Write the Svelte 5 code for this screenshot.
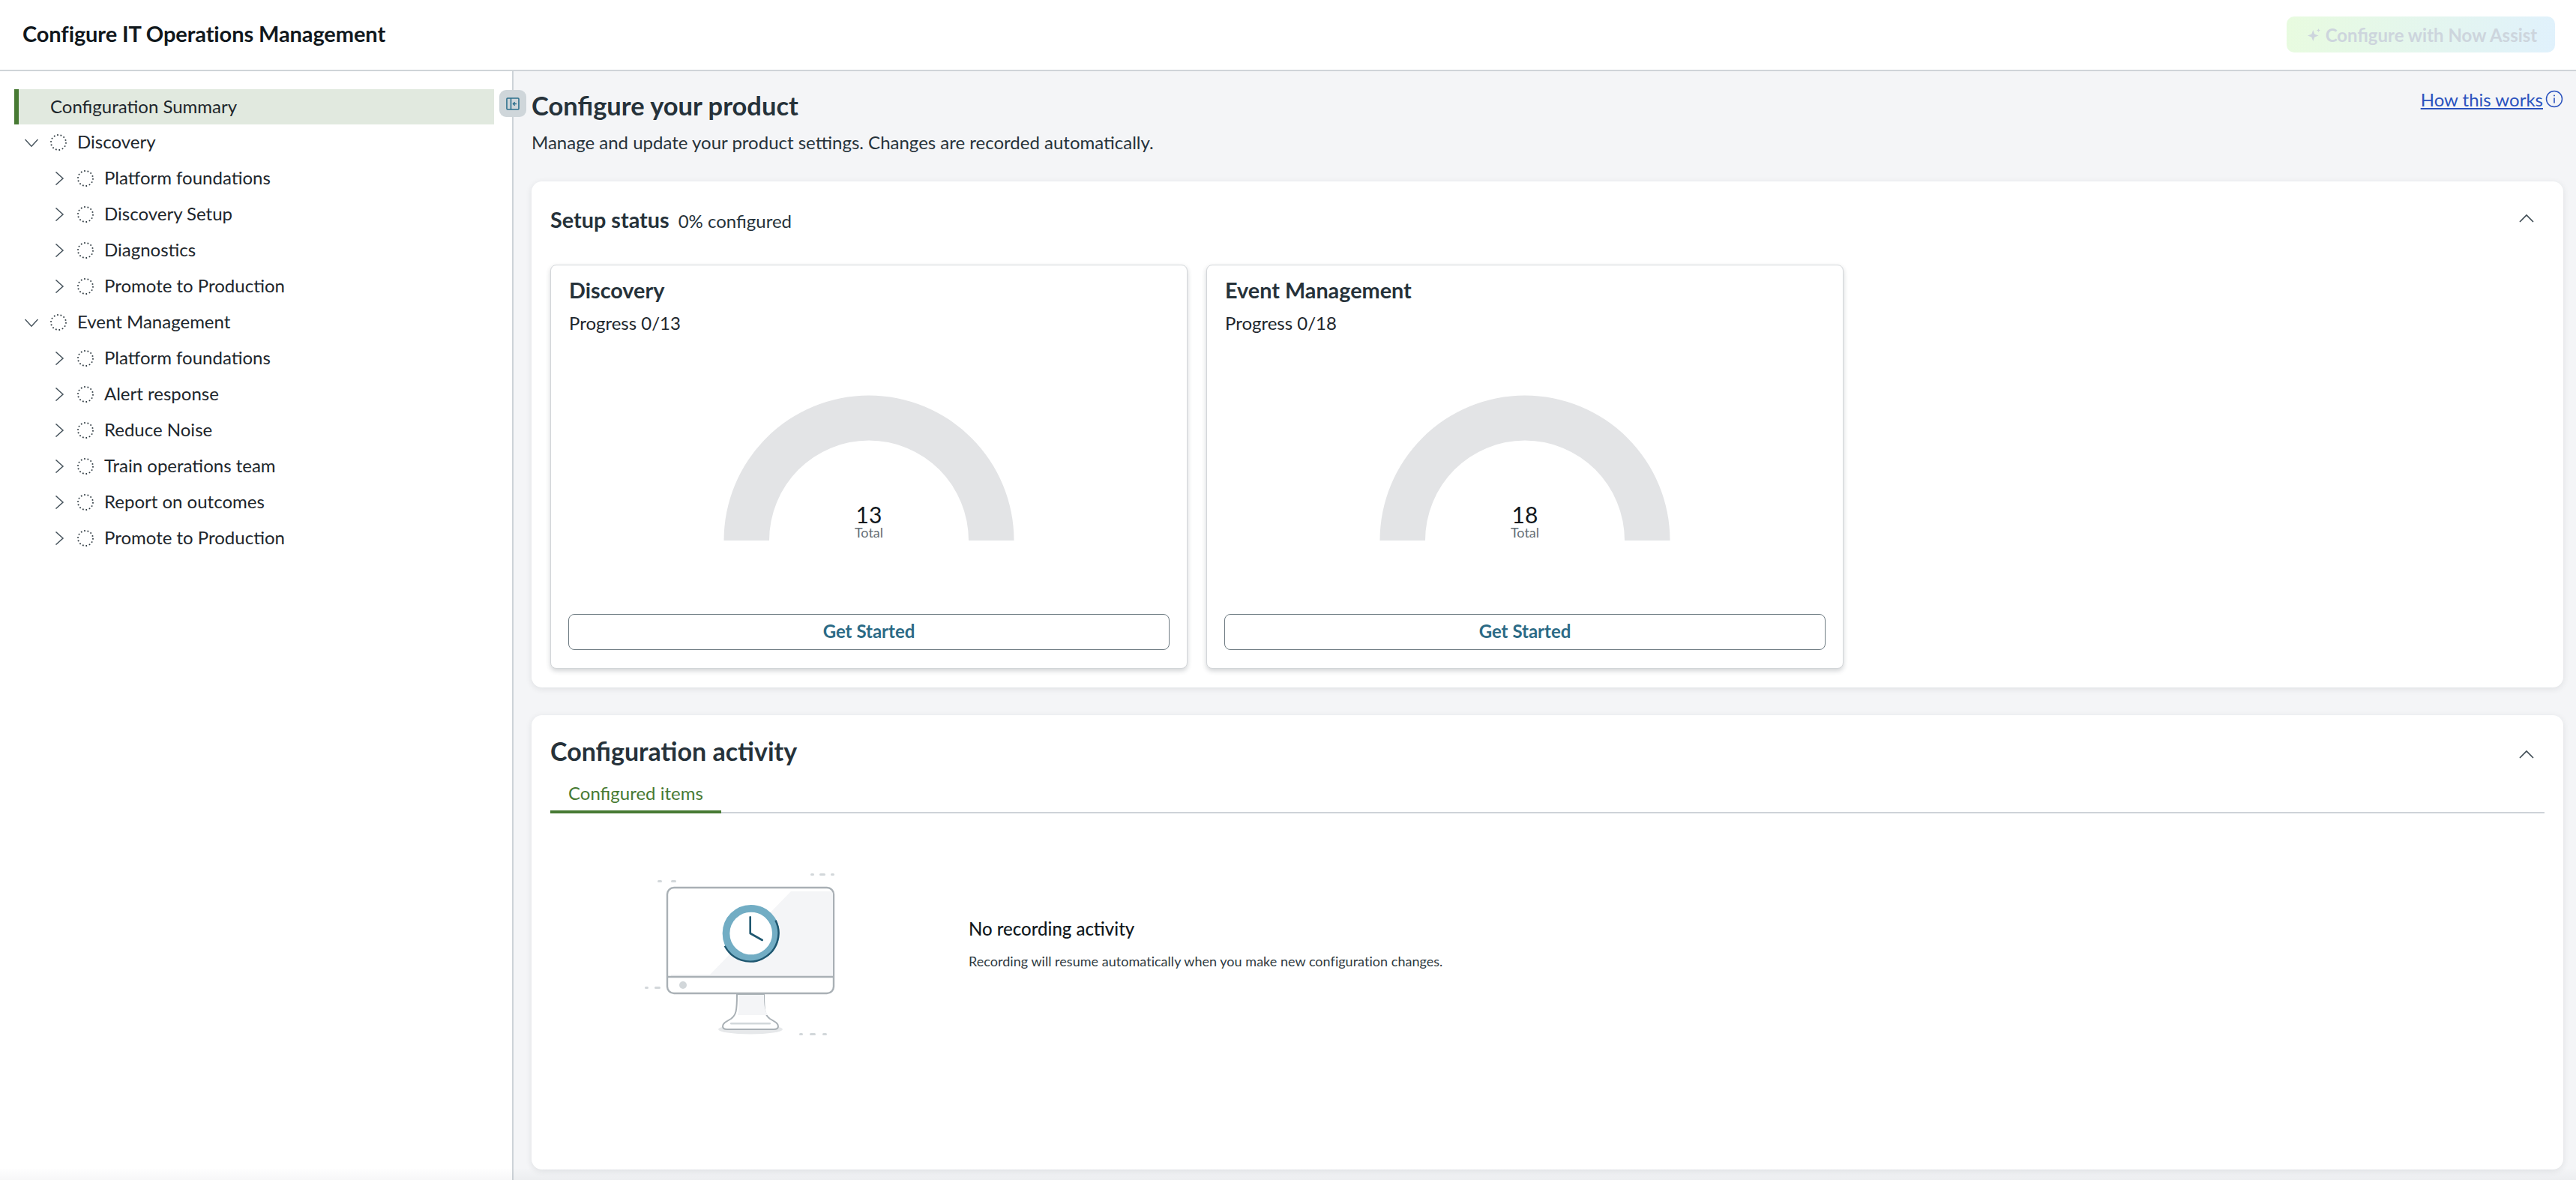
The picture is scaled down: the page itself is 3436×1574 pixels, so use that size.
<script>
  const groups = [
    { name: 'Discovery', items: ['Platform foundations', 'Discovery Setup', 'Diagnostics', 'Promote to Production'] },
    { name: 'Event Management', items: ['Platform foundations', 'Alert response', 'Reduce Noise', 'Train operations team', 'Report on outcomes', 'Promote to Production'] }
  ];
  const products = [
    { name: 'Discovery', total: 13 },
    { name: 'Event Management', total: 18 }
  ];
</script>

{#snippet ring()}
  <svg class="dot" viewBox="0 0 24 24" width="24" height="24"><circle cx="12" cy="12" r="10" fill="none" stroke="#2f3a41" stroke-width="1.800" stroke-dasharray="1.700 2.790"/></svg>
{/snippet}

<div class="page">
  <header class="topbar">
    <h1 class="app-title">Configure IT Operations Management</h1>
    <button class="assist" disabled>
      <svg viewBox="0 0 17 17" width="17" height="17"><path d="M7.300 2l2 5.400 5.300 2.100-5.300 2.100-2 5.400-2-5.400L0 9.500l5.300-2.100z" fill="#cdd5dd"/><path d="M14.500 0l.8 1.700 1.700.8-1.700.8-.8 1.700-.8-1.700-1.700-.8 1.700-.8z" fill="#cdd5dd"/></svg>
      <span>Configure with Now Assist</span>
    </button>
  </header>

  <div class="body">
    <nav class="sidebar">
      <div class="summary">Configuration Summary</div>
      {#each groups as g}
        <div class="row parent">
          <svg viewBox="0 0 18 18" width="18" height="18"><path d="M.5 5l8.500 9.200L17.500 5" fill="none" stroke="#46535c" stroke-width="1.500"/></svg>
          {@render ring()}
          <span class="label">{g.name}</span>
        </div>
        {#each g.items as item}
          <div class="row child">
            <svg viewBox="0 0 18 18" width="18" height="18"><path d="M4.500 .5l9.500 8.500-9.500 8.500" fill="none" stroke="#46535c" stroke-width="1.500"/></svg>
            {@render ring()}
            <span class="label">{item}</span>
          </div>
        {/each}
      {/each}
    </nav>

    <button class="collapse" aria-label="Collapse">
      <svg viewBox="0 0 18 17" width="18" height="17"><rect x="1" y="1" width="16" height="15" rx="1" fill="none" stroke="#2b6f8c" stroke-width="1.600"/><path d="M6.500 1v15" stroke="#2b6f8c" stroke-width="1.600"/><path d="M14 8.500H9.500M11.700 6.200 9.400 8.500l2.300 2.300" fill="none" stroke="#2b6f8c" stroke-width="1.400"/></svg>
    </button>

    <main class="main">
      <div class="page-head">
        <div>
          <h2 class="page-title">Configure your product</h2>
          <p class="page-sub">Manage and update your product settings. Changes are recorded automatically.</p>
        </div>
        <div class="how">
          <a href="#how">How this works</a>
          <svg viewBox="0 0 24 24" width="24" height="24"><circle cx="12" cy="12" r="10.500" fill="none" stroke="#2a52be" stroke-width="1.500"/><path d="M12 10.500v7" stroke="#2a52be" stroke-width="1.600"/><circle cx="12" cy="7.500" r="1" fill="#2a52be"/></svg>
        </div>
      </div>

      <section class="panel setup">
        <div class="panel-head">
          <div class="status"><span class="status-title">Setup status</span><span class="status-val">0% configured</span></div>
          <svg viewBox="0 0 20 12" width="20" height="12"><path d="M1 11l9-9 9 9" fill="none" stroke="#3d4a52" stroke-width="1.600"/></svg>
        </div>
        <div class="cards">
          {#each products as p}
            <article class="card">
              <h3 class="card-title">{p.name}</h3>
              <div class="progress">Progress 0/{p.total}</div>
              <div class="gauge">
                <svg viewBox="0 0 388 194" width="388" height="194"><path d="M.5 194A193.500 193.500 0 0 1 387.500 194H327A133 133.500 0 0 0 61 194Z" fill="#e3e4e6"/></svg>
                <div class="gauge-num">{p.total}</div>
                <div class="gauge-label">Total</div>
              </div>
              <button class="start"><span>Get Started</span></button>
            </article>
          {/each}
        </div>
      </section>

      <section class="panel activity">
        <div class="activity-head">
          <h2 class="activity-title">Configuration activity</h2>
          <svg class="activity-chev" viewBox="0 0 20 12" width="20" height="12"><path d="M1 11l9-9 9 9" fill="none" stroke="#3d4a52" stroke-width="1.600"/></svg>
        </div>
        <div class="tabs"><div class="tab">Configured items</div></div>
        <div class="empty">
          <svg class="illus" viewBox="0 0 340 280" width="340" height="280">
            <g fill="#d2d7da">
              <rect x="57" y="44" width="6" height="3" rx="1.500"/><rect x="75" y="44" width="7" height="3" rx="1.500"/>
              <rect x="261" y="35" width="5" height="3" rx="1.500"/><rect x="273" y="35" width="8" height="3" rx="1.500"/><rect x="288" y="35" width="5" height="3" rx="1.500"/>
              <rect x="40" y="186" width="5" height="3" rx="1.500"/><rect x="53" y="186" width="8" height="3" rx="1.500"/>
              <rect x="246" y="248" width="5" height="3" rx="1.500"/><rect x="260" y="248" width="8" height="3" rx="1.500"/><rect x="277" y="248" width="6" height="3" rx="1.500"/>
            </g>
            <ellipse cx="181" cy="243" rx="43" ry="6.500" fill="#e6e8ea"/>
            <path d="M163 196c0 22-1 28-8 33-7 4-11 6-11 10 0 3 3 4 6 4h62c3 0 6-1 6-4 0-4-4-6-11-10-7-5-8-11-8-33z" fill="#fff" stroke="#a9b0b5" stroke-width="2"/>
            <path d="M165 197h34c0 14 1 20 5 27h-40c2-7 1-13 1-27z" fill="#f4f5f7"/>
            <rect x="154" y="234" width="54" height="2.500" rx="1.200" fill="#d2d7da"/>
            <rect x="70" y="54" width="222" height="141" rx="9" fill="#fff" stroke="#a9b0b5" stroke-width="2.400"/>
            <path d="M75 59h212a4 4 0 0 1 4 4v109H75z" fill="#f4f5f7"/>
            <path d="M75 59h160L127 170H75z" fill="#fff"/>
            <path d="M70 173h222" stroke="#a9b0b5" stroke-width="2.400"/>
            <circle cx="91" cy="184" r="5" fill="#d2d7da"/>
            <circle cx="181.700" cy="115" r="33.200" fill="#fff" stroke="#72adc4" stroke-width="9.700"/>
            <path d="M214.400 97.600A37 37 0 1 1 146.700 131.700" fill="none" stroke="#1f5770" stroke-width="2.400"/>
            <path d="M180.700 93.300V115l16 9" fill="none" stroke="#1f5770" stroke-width="2.600" stroke-linecap="round" stroke-linejoin="round"/>
          </svg>
          <div class="empty-text">
            <div class="empty-title">No recording activity</div>
            <div class="empty-sub">Recording will resume automatically when you make new configuration changes.</div>
          </div>
        </div>
      </section>
    </main>

    <div class="fade"></div>
  </div>
</div>

<style>
  :global(body) { margin: 0; background: #fff; }
  .page { width: 3436px; height: 1574px; display: flex; flex-direction: column; font-family: Lato, "Liberation Sans", sans-serif; color: #1d262c; overflow: hidden; }
  .topbar { height: 93px; flex: none; display: flex; align-items: center; justify-content: space-between; padding: 0 28px 0 30px; background: #fff; border-bottom: 2px solid #cfd4d8; }
  .app-title { margin: 0 0 4px; font-size: 29px; letter-spacing: -0.1px; font-weight: 700; color: #11181d; }
  .assist { width: 358px; height: 48px; border: 0; border-radius: 10px; margin-bottom: 2px; display: flex; align-items: center; justify-content: center; gap: 7px; background: linear-gradient(100deg, #e8fbdf, #e0f1fc); color: #cdd5dd; font: 700 24px Lato, sans-serif; padding: 1px 0 0 4px; }
  .assist span { padding-top: 1px; }
  .body { flex: 1; display: flex; position: relative; min-height: 0; }
  .sidebar { width: 683px; flex: none; border-right: 2px solid #cdd3d8; padding-top: 24px; background: #fff; }
  .summary { margin-left: 19px; width: 640px; height: 47px; box-sizing: border-box; border-left: 6px solid #477a33; background: #e1e9df; padding-left: 42px; font-size: 24px; line-height: 45px; color: #1d262c; }
  .row { height: 48px; display: flex; align-items: center; font-size: 24px; color: #1d262c; }
  .row svg { flex: none; }
  .label { padding-bottom: 4px; }
  .parent { padding-left: 33px; }
  .child { padding-left: 70px; }
  .dot { display: block; }
  .parent .dot { margin: 0 13px 0 15px; }
  .child .dot { margin: 0 13px 0 14px; }
  .collapse { position: absolute; left: 666px; top: 25px; width: 36px; height: 36px; border: 0; padding: 0; border-radius: 9px; background: #cfd6da; display: flex; align-items: center; justify-content: center; }
  .main { flex: 1; min-width: 0; background: #f4f5f7; padding: 0 17px 0 24px; display: flex; flex-direction: column; }
  .page-head { display: flex; justify-content: space-between; height: 147px; flex: none; }
  .page-title { margin: 24px 0 0; font-size: 34.500px; line-height: 44px; font-weight: 700; color: #26323a; }
  .page-sub { margin: 12px 0 0; font-size: 24px; line-height: 30px; color: #26323a; }
  .how { display: flex; align-items: center; gap: 3px; height: 24px; margin: 25px 0 0 0; font-size: 24px; }
  .how a { color: #2a52be; text-decoration: underline; }
  .panel { background: #fff; border-radius: 14px; box-shadow: 0 2px 9px rgba(30, 40, 50, 0.1); box-sizing: border-box; }
  .setup { height: 675px; flex: none; padding: 0 25px; }
  .panel-head { height: 111px; box-sizing: border-box; padding: 0 14px 14px 0; display: flex; align-items: center; justify-content: space-between; }
  .status { display: flex; align-items: baseline; gap: 12px; margin-top: 4px; }
  .status-title { font-size: 28.800px; font-weight: 700; color: #26323a; }
  .status-val { font-size: 24px; color: #26323a; }
  .cards { display: flex; gap: 25px; }
  .card { width: 850px; height: 539px; box-sizing: border-box; background: #fff; border: 1px solid #d3d6d9; border-radius: 8px; box-shadow: 0 3px 6px rgba(30, 40, 50, 0.2); padding: 12px 24px 24px; display: flex; flex-direction: column; }
  .card-title { margin: 0; font-size: 28.800px; line-height: 42px; font-weight: 700; color: #26323a; }
  .progress { font-size: 24px; line-height: 30px; margin-top: 8px; color: #1d262c; }
  .gauge { position: relative; width: 388px; height: 194px; margin: 81px auto 0; flex: none; }
  .gauge svg { display: block; }
  .gauge-num { position: absolute; left: 0; right: 0; top: 144px; text-align: center; font-size: 30px; line-height: 30px; color: #11181d; }
  .gauge-label { position: absolute; left: 0; right: 0; top: 174px; text-align: center; font-size: 18px; line-height: 18px; color: #666e74; }
  .start { margin: auto -1px 0; height: 48px; background: #fff; border: 1.500px solid #6f7c83; border-radius: 8px; color: #2b6a85; font: 700 24px Lato, sans-serif; padding: 0 0 3px; }
  .activity { flex: none; margin-top: 37px; height: 606px; padding: 0 25px; }
  .activity-head { height: 94px; padding-bottom: 2px; display: flex; align-items: center; justify-content: space-between; padding-right: 14px; }
  .activity-chev { margin-top: 10px; }
  .activity-title { margin: 0; font-size: 34px; font-weight: 700; color: #26323a; }
  .tabs { height: 35px; border-bottom: 2px solid #ced3d8; box-sizing: border-box; }
  .tab { width: 228px; height: 35px; box-sizing: border-box; border-bottom: 4px solid #477a33; padding-left: 24px; font-size: 24px; line-height: 16px; color: #477a33; }
  .empty { display: flex; align-items: flex-start; padding-left: 86px; margin-top: 45px; gap: 132px; }
  .illus { display: block; flex: none; }
  .empty-text { margin-top: 94px; }
  .empty-title { font-size: 24px; line-height: 30px; font-weight: 500; color: #11181d; }
  .empty-sub { font-size: 18px; letter-spacing: 0.03px; line-height: 24px; margin-top: 16px; color: #2f3a41; }
  .fade { position: absolute; left: 0; right: 0; bottom: 0; height: 16px; background: linear-gradient(rgba(60, 70, 80, 0), rgba(60, 70, 80, 0.045)); pointer-events: none; }
</style>
